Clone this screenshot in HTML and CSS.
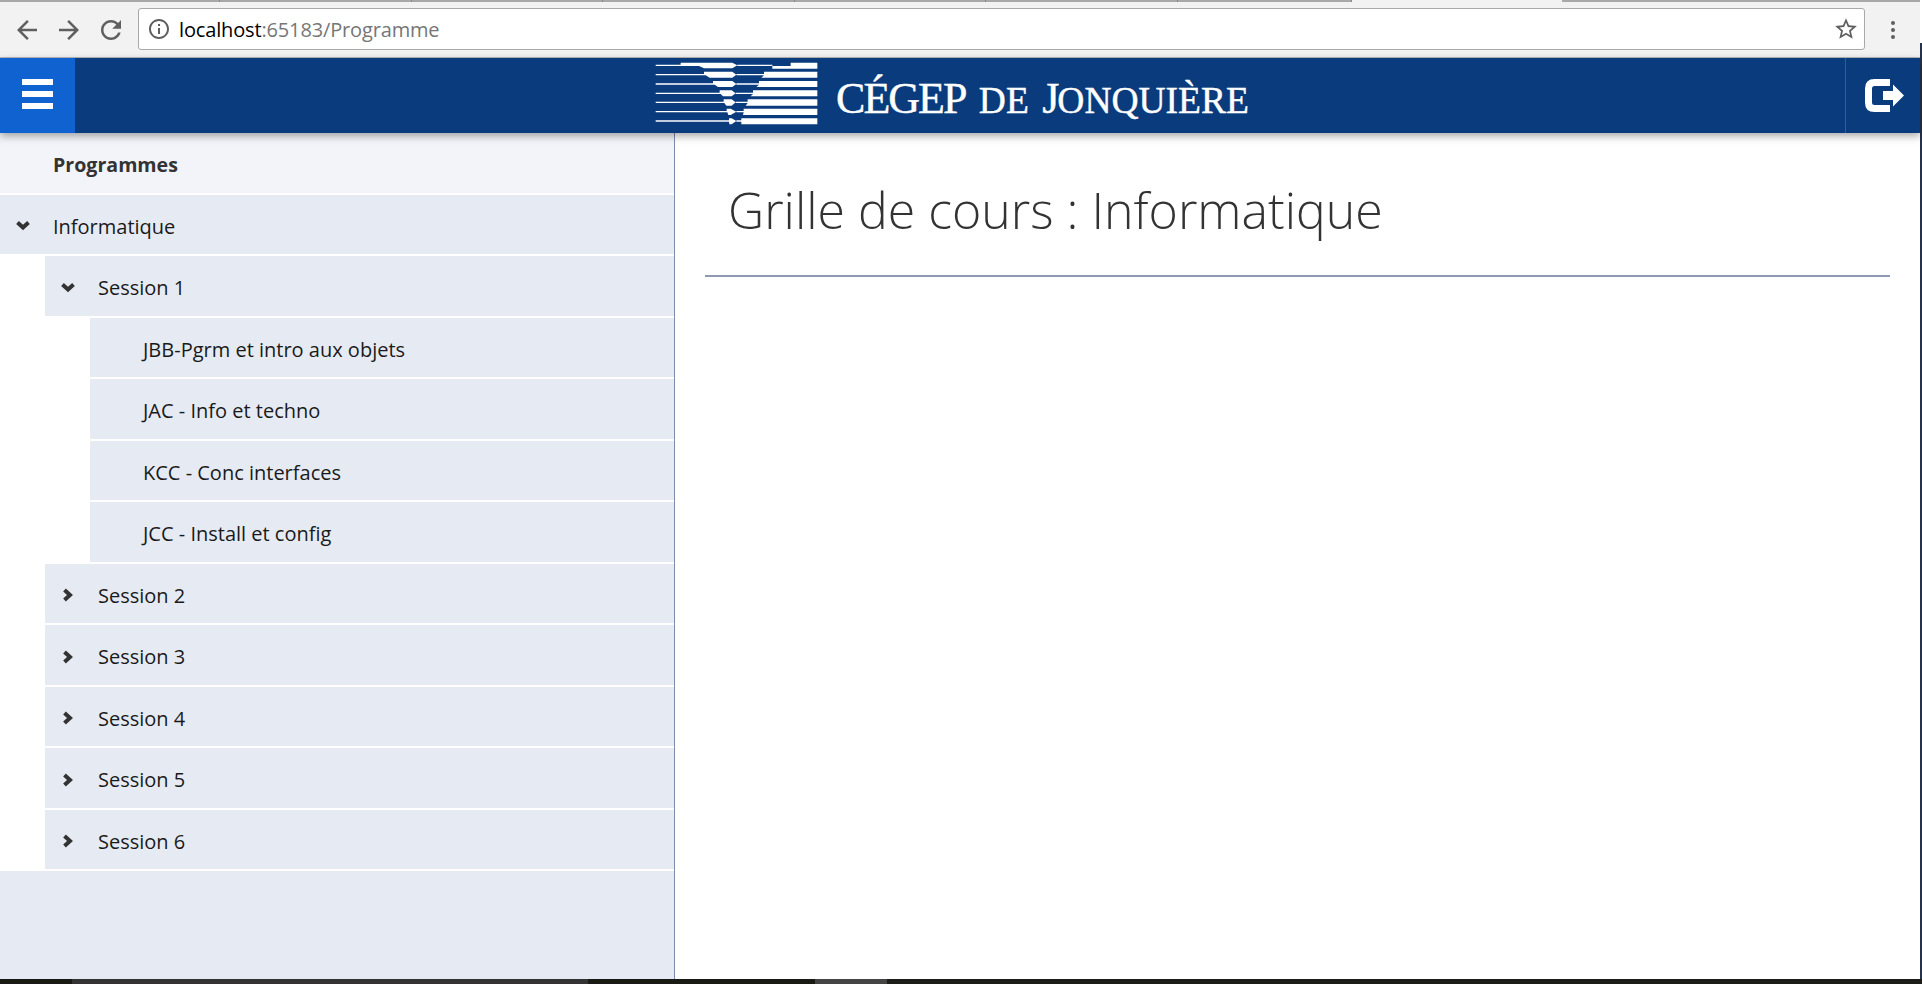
FILE: index.html
```html
<!DOCTYPE html>
<html lang="fr">
<head>
<meta charset="utf-8">
<title>Programme</title>
<link rel="stylesheet" href="styles.css">
</head>
<body>
<div class="desktop">
  <div class="window">
    <div class="tabstrip">
      <span class="tab t1"></span><span class="tab t2"></span><span class="tab t2"></span><span class="tab t2"></span><span class="tab t2"></span><span class="tab t2"></span><span class="tab t3"></span>
      <span class="tab-active"></span>
      <span class="tab-rest"></span>
    </div>
    <div class="toolbar">
      <svg class="tb-icon" viewBox="0 0 24 24"><path d="M20 11H7.830l5.590-5.590L12 4l-8 8 8 8 1.410-1.410L7.830 13H20v-2z"/></svg>
      <svg class="tb-icon" viewBox="0 0 24 24"><path d="M12 4l-1.410 1.410L16.170 11H4v2h12.170l-5.580 5.590L12 20l8-8z"/></svg>
      <svg class="tb-icon" viewBox="0 0 24 24"><path d="M17.650 6.350C16.200 4.900 14.210 4 12 4c-4.420 0-7.990 3.580-7.990 8s3.570 8 7.990 8c3.730 0 6.840-2.550 7.730-6h-2.080c-.820 2.330-3.040 4-5.650 4-3.310 0-6-2.690-6-6s2.690-6 6-6c1.660 0 3.140.690 4.220 1.780L13 11h7V4l-2.350 2.350z"/></svg>
      <div class="omnibox">
        <svg class="info-icon" viewBox="0 0 24 24"><path d="M11 17h2v-6h-2v6zm1-15C6.480 2 2 6.480 2 12s4.480 10 10 10 10-4.480 10-10S17.520 2 12 2zm0 18c-4.410 0-8-3.590-8-8s3.590-8 8-8 8 3.590 8 8-3.590 8-8 8zm-1-11h2V7h-2v2z"/></svg>
        <span class="url">localhost<span class="url-dim">:65183/Programme</span></span>
        <svg class="star-icon" viewBox="0 0 24 24"><path d="M22 9.240l-7.190-.620L12 2 9.190 8.630 2 9.240l5.460 4.730L5.820 21 12 17.270 18.180 21l-1.630-7.030L22 9.240zM12 15.400l-3.760 2.270 1-4.280-3.320-2.880 4.380-.380L12 6.100l1.710 4.040 4.380.380-3.320 2.880 1 4.280L12 15.400z"/></svg>
      </div>
      <div class="menu-dots"><span></span><span></span><span></span></div>
    </div>

    <header class="topbar">
      <button class="burger" type="button" aria-label="Menu"><span></span><span></span><span></span></button>
      <div class="brand">
        <svg class="brand-mark" viewBox="0 0 570 225">
          <g class="mark-fill">
            <path d="M20 20H95V14H250L265 22L250 31H165L150 24H20Z"/>
            <path d="M265 20H370V24H425V14H505V32H370V24H265Z"/>
            <path d="M20 48H165V41H250L262 50L250 59H182L170 52H20Z"/>
            <path d="M262 48H345V41H505V59H337L345 52H262Z"/>
            <path d="M20 76H192V69H250L262 78L250 87H207L197 80H20Z"/>
            <path d="M262 76H330V69H505V87H322L330 80H262Z"/>
            <path d="M20 104H212V97H248L260 106L248 115H222L215 108H20Z"/>
            <path d="M260 104H312V97H505V115H305L312 108H260Z"/>
            <path d="M20 131H224V124H248L260 133L248 143H232L226 135H20Z"/>
            <path d="M260 131H296V124H505V143H290L296 135H260Z"/>
            <path d="M20 159H233V152H245L262 161L245 171H238L235 163H20Z"/>
            <path d="M262 159H284V152H505V171H282L284 163H262Z"/>
            <path d="M20 187H240V181H248L262 189L248 199H241L240 191H20Z"/>
            <path d="M262 187H277V181H505V199H277V191H262Z"/>
          </g>
        </svg>
        <span class="brand-name"><span class="brand-big">CÉGEP</span> DE <span class="brand-big">J</span>ONQUIÈRE</span>
      </div>
      <button class="logout" type="button" aria-label="Déconnexion">
        <svg viewBox="0 0 39 33"><path class="logout-door" d="M25 3.500H9.500Q3.500 3.500 3.500 9.500V23.500Q3.500 29.500 9.500 29.500H25"/><path class="logout-arrow" d="M18 12H28V5.500L39 16.500L28 27.500V21H18Z"/></svg>
      </button>
    </header>

    <div class="content">
      <aside class="sidebar">
        <ul class="tree">
          <li class="row row-title"><span class="title-text">Programmes</span></li>
          <li>
            <div class="row"><svg class="chev" viewBox="0 0 14 14"><path d="M1.500 3.500L7 8.500L12.500 3.500"/></svg>Informatique</div>
            <ul class="tree-sub">
              <li>
                <div class="row"><svg class="chev" viewBox="0 0 14 14"><path d="M1.500 3.500L7 8.500L12.500 3.500"/></svg>Session 1</div>
                <ul class="tree-sub">
                  <li class="row row-leaf">JBB-Pgrm et intro aux objets</li>
                  <li class="row row-leaf">JAC - Info et techno</li>
                  <li class="row row-leaf">KCC - Conc interfaces</li>
                  <li class="row row-leaf">JCC - Install et config</li>
                </ul>
              </li>
              <li class="row"><svg class="chev" viewBox="0 0 14 14"><path d="M3.500 2L9 7L3.500 12"/></svg>Session 2</li>
              <li class="row"><svg class="chev" viewBox="0 0 14 14"><path d="M3.500 2L9 7L3.500 12"/></svg>Session 3</li>
              <li class="row"><svg class="chev" viewBox="0 0 14 14"><path d="M3.500 2L9 7L3.500 12"/></svg>Session 4</li>
              <li class="row"><svg class="chev" viewBox="0 0 14 14"><path d="M3.500 2L9 7L3.500 12"/></svg>Session 5</li>
              <li class="row"><svg class="chev" viewBox="0 0 14 14"><path d="M3.500 2L9 7L3.500 12"/></svg>Session 6</li>
            </ul>
          </li>
        </ul>
        <div class="sidebar-fill"></div>
      </aside>
      <main class="main">
        <h1 class="page-title">Grille de cours : Informatique</h1>
        <hr class="rule">
      </main>
    </div>
  </div>
  <div class="edge"></div>
</div>
<div class="taskbar">
  <span class="tk tk-a"></span><span class="tk tk-b"></span><span class="tk tk-c"></span><span class="tk tk-d"></span><span class="tk tk-e"></span>
</div>
</body>
</html>
```
FILE: styles.css
```css
* { box-sizing: border-box; }
html, body { margin: 0; padding: 0; height: 100%; overflow: hidden; }
body {
  display: flex;
  flex-direction: column;
  font-family: "Open Sans", "Liberation Sans", sans-serif;
  background: #fff;
  color: #212529;
}
.desktop { flex: 1; display: flex; min-height: 0; }
.window { flex: 1; display: flex; flex-direction: column; min-width: 0; }
.edge { width: 2px; background: linear-gradient(#fff 0 43px, #26324a 43px); }

.tabstrip { height: 2px; display: flex; background: #f2f2f2; }
.tab { height: 2px; background: #a8a8a8; border-right: 1px solid #888; }
.t1 { width: 220px; }
.t2 { width: 191.6px; }
.t3 { width: 174px; }
.tab-active { width: 210px; }
.tab-rest { flex: 1; background: #a8a8a8; }

.toolbar {
  height: 56px;
  display: flex;
  align-items: center;
  padding-left: 12px;
  background: #f2f2f2;
  border-bottom: 1px solid #b9b9b9;
}
.tb-icon { width: 30px; height: 30px; margin-right: 12px; fill: #5f5f5f; flex: none; }
.omnibox {
  flex: 1;
  height: 42px;
  margin-top: -1px;
  display: flex;
  align-items: center;
  padding: 0 5px 0 8px;
  background: #fff;
  border: 1px solid #a9a9a9;
  border-radius: 3px;
}
.info-icon { width: 24px; height: 24px; fill: #5f5f5f; flex: none; }
.url { margin-left: 8px; flex: 1; font-size: 20px; color: #000; letter-spacing: -0.15px; }
.url-dim { color: #767676; }
.star-icon { width: 26px; height: 26px; fill: #5f5f5f; flex: none; }
.menu-dots { width: 55px; display: flex; flex-direction: column; align-items: center; gap: 3px; }
.menu-dots span { width: 4px; height: 4px; border-radius: 50%; background: #5f5f5f; }

.topbar {
  position: relative;
  z-index: 2;
  height: 75px;
  display: flex;
  background: #0a3b7c;
  box-shadow: 0 3px 8px rgba(0, 0, 0, 0.35);
}
.burger {
  width: 75px;
  padding: 0 0 3px 22px;
  display: flex;
  flex-direction: column;
  justify-content: center;
  gap: 6px;
  border: 0;
  background: #0f62cf;
}
.burger span { width: 31px; height: 6px; background: #fff; }
.brand {
  flex: 1;
  display: flex;
  align-items: center;
  justify-content: center;
  padding-right: 22px;
}
.brand-mark { width: 190px; height: 75px; flex: none; }
.mark-fill { fill: #fff; }
.brand-name {
  margin-left: -3px;
  font-family: "Liberation Serif", serif;
  font-size: 37.500px;
  line-height: 1;
  color: #fff;
  white-space: nowrap;
  padding-top: 6px;
  word-spacing: 4px;
  -webkit-text-stroke: 0.4px #fff;
}
.brand-big { font-size: 44px; letter-spacing: -2px; }
.logout {
  width: 75px;
  padding: 0 0 0 19px;
  display: flex;
  align-items: center;
  border: 0;
  border-left: 1px solid #0f62cf;
  background: transparent;
}
.logout svg { width: 39px; height: 33px; }
.logout-door { fill: none; stroke: #fff; stroke-width: 7; }
.logout-arrow { fill: #fff; }

.content { flex: 1; display: flex; min-height: 0; }
.sidebar {
  width: 675px;
  flex: none;
  display: flex;
  flex-direction: column;
  border-right: 1px solid #7f8bad;
}
.tree, .tree-sub { list-style: none; margin: 0; padding: 0; }
.tree-sub { padding-left: 45px; }
.row {
  height: 59.500px;
  margin-bottom: 2px;
  padding-top: 3px;
  display: flex;
  align-items: center;
  background: #e6ebf3;
  font-size: 20px;
  color: #1a1a1a;
  white-space: nowrap;
}
.row-title { height: 59.900px; padding-left: 53px; background: #f2f4f9; font-size: 19.600px; }
.title-text { font-weight: 700; color: #333; }
.row-leaf { padding-left: 53px; }
.chev {
  width: 14px;
  height: 14px;
  margin-left: 16px;
  margin-right: 23px;
  flex: none;
  fill: none;
  stroke: #333;
  stroke-width: 4;
}
.sidebar-fill { flex: 1; background: #e6ebf3; }

.main { flex: 1; min-width: 0; padding: 0 30px; }
.page-title {
  margin: 0;
  padding: 47px 0 0 23px;
  height: 142px;
  font-size: 50px;
  font-weight: 300;
  line-height: 60px;
  color: #333;
  white-space: nowrap;
}
.rule { margin: 0; border: 0; height: 2px; background: #8e99b5; }

.taskbar { height: 5px; display: flex; flex: none; }
.tk { height: 5px; }
.tk-a { width: 72px; background: #1a1a14; }
.tk-b { width: 516px; background: #333; }
.tk-c { width: 227px; background: #1a1a14; }
.tk-d { width: 72px; background: #444; }
.tk-e { flex: 1; background: #1c1c18; }
```
